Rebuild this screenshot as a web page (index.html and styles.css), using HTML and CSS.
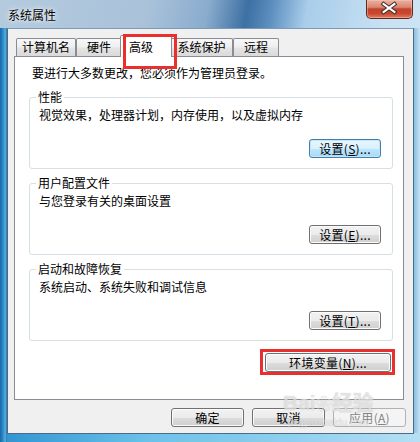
FILE: index.html
```html
<!DOCTYPE html>
<html lang="zh-CN">
<head>
<meta charset="utf-8">
<title>系统属性</title>
<link rel="stylesheet" href="styles.css">
</head>
<body>
<div class="window">
  <div class="titlebar">
    <span class="title">系统属性</span>
    <button class="close" aria-label="关闭">
      <svg width="47" height="19" viewBox="0 0 47 19">
        <path d="M18 5 L29 13 M29 5 L18 13" stroke="#3a2a2a" stroke-width="4.2" stroke-linecap="square" fill="none"/>
        <path d="M18 5 L29 13 M29 5 L18 13" stroke="#ffffff" stroke-width="2.2" stroke-linecap="square" fill="none"/>
      </svg>
    </button>
  </div>
  <div class="client">
    <div class="tabs">
      <div class="tab tab-name">计算机名</div>
      <div class="tab tab-hw">硬件</div>
      <div class="tab tab-active">高级</div>
      <div class="tab tab-prot">系统保护</div>
      <div class="tab tab-remote">远程</div>
    </div>
    <div class="panel">
      <p class="intro">要进行大多数更改，您必须作为管理员登录。</p>
      <div class="group">
        <div class="group-title">性能</div>
        <p class="group-desc">视觉效果，处理器计划，内存使用，以及虚拟内存</p>
        <button class="btn btn-focus btn-set">设置(<u>S</u>)...</button>
      </div>
      <div class="group">
        <div class="group-title">用户配置文件</div>
        <p class="group-desc">与您登录有关的桌面设置</p>
        <button class="btn btn-set">设置(<u>E</u>)...</button>
      </div>
      <div class="group">
        <div class="group-title">启动和故障恢复</div>
        <p class="group-desc">系统启动、系统失败和调试信息</p>
        <button class="btn btn-set">设置(<u>T</u>)...</button>
      </div>
      <button class="btn btn-env">环境变量(<u>N</u>)...</button>
    </div>
    <div class="actions">
      <button class="btn btn-action">确定</button>
      <button class="btn btn-action">取消</button>
      <button class="btn btn-action btn-disabled">应用(<u>A</u>)</button>
    </div>
    <div class="watermark"><span class="wm-big">Bai<span class="wm-paw">❀</span>经验</span><span class="wm-small">jingyan.baidu.com</span></div>
  </div>
</div>
</body>
</html>
```

FILE: styles.css
```css
* {
  box-sizing: border-box;
}

html, body {
  margin: 0;
  padding: 0;
  background: #ffffff;
}

body {
  width: 420px;
  height: 442px;
  overflow: hidden;
  font-family: "Noto Sans CJK SC", "Microsoft YaHei", sans-serif;
  font-size: 12px;
  color: #000;
}

.window {
  width: 420px;
  height: 442px;
  display: flex;
  flex-direction: column;
  background:
    linear-gradient(to right, #1b67a6 0%, #2d8ccd 45%, #58b0e2 75%, #2b6f9e 100%) left 28px / 7px 100% no-repeat,
    linear-gradient(to right, #2f93d2 0%, #6cc1ea 35%, #8fd0ef 70%, #b6dff3 100%) left bottom / 100% 9px no-repeat,
    linear-gradient(to right, #7fb8e0 0%, #c7e2f4 100%) right 28px / 7px 100% no-repeat,
    linear-gradient(100deg, #b4cade 0%, #a9c2da 30%, #8aaccd 42%, #3d70a3 50%, #5d90c0 55%, #a9cdea 62%, #c8e1f3 78%, #d6e8f5 100%);
}

.titlebar {
  height: 28px;
  display: flex;
  justify-content: space-between;
  align-items: flex-start;
  flex-shrink: 0;
}

.title {
  padding: 8px 0 0 8px;
  line-height: 14px;
  font-size: 12px;
  color: #000;
  text-shadow: 0 0 6px rgba(255, 255, 255, 0.9), 0 0 3px rgba(255, 255, 255, 0.9);
}

.close {
  width: 47px;
  height: 19px;
  margin: 0 7px 0 0;
  padding: 0;
  border: 1px solid #5a2b24;
  border-top: none;
  border-radius: 0 0 5px 5px;
  background: linear-gradient(#eab2a4 0%, #d98670 40%, #c4412b 50%, #c9472f 75%, #e27d60 100%);
  box-shadow: inset 0 0 0 1px rgba(255, 200, 180, 0.45);
  display: flex;
  align-items: center;
  justify-content: center;
}

.close svg {
  display: block;
  margin: -1px 0 0 -1px;
}

.client {
  position: relative;
  width: 407px;
  height: 406px;
  margin-left: 7px;
  background: #f0f0f0;
  border: 1px solid #4d6b85;
  border-top-color: #7f9ab2;
  display: flex;
  flex-direction: column;
}

.tabs {
  position: relative;
  z-index: 1;
  display: flex;
  align-items: flex-end;
  height: 22px;
  margin: 6px 0 0 8px;
}

.tab {
  height: 18px;
  margin-bottom: 1px;
  border: 1px solid #898c95;
  border-bottom: none;
  border-radius: 2px 2px 0 0;
  background: linear-gradient(#f8f8f8 0%, #efefef 45%, #e4e4e4 55%, #dadada 100%);
  line-height: 16px;
  text-align: center;
  white-space: nowrap;
}

.tab-name { width: 60px; }
.tab-hw { width: 46px; }
.tab-prot { width: 63px; }
.tab-remote { width: 46px; }

.tab-active {
  position: relative;
  width: 52px;
  height: 22px;
  margin: 0 -2px;
  background: #ffffff;
  line-height: 22px;
  text-align: left;
  padding-left: 8px;
  z-index: 2;
}

.tab-active::after {
  content: "";
  position: absolute;
  left: 2px;
  top: -2px;
  width: 48px;
  height: 29px;
  border: 3px solid #ea2f2f;
}

.panel {
  width: 390px;
  height: 344px;
  margin: -1px 0 0 6px;
  background: #ffffff;
  border: 1px solid #898c95;
  padding: 9px 10px 0 14px;
  display: flex;
  flex-direction: column;
}

.intro {
  margin: 0 0 0 3px;
  line-height: 14px;
}

.group {
  display: flex;
  flex-direction: column;
  border: 1px solid #d5dfe5;
  border-radius: 3px;
  padding: 0 11px 10px 8px;
  margin-top: 14px;
}

.intro + .group {
  margin-top: 17px;
}

.group-title {
  align-self: flex-start;
  margin: -8px 0 0 -2px;
  padding: 0 2px;
  background: #ffffff;
  line-height: 14px;
}

.group-desc {
  margin: 4px 0 0 1px;
  line-height: 14px;
}

.btn {
  height: 19px;
  padding: 0;
  border: 1px solid #707070;
  border-radius: 3px;
  background: linear-gradient(#f2f2f2 0%, #ebebeb 50%, #dddddd 51%, #cfcfcf 100%);
  box-shadow: inset 0 0 0 1px #fbfbfb;
  font-family: "Noto Sans CJK SC", "Microsoft YaHei", sans-serif;
  font-size: 12px;
  line-height: 16px;
  color: #000;
  text-align: center;
  letter-spacing: 0.3px;
}

.btn u {
  text-decoration: underline;
  text-underline-offset: 1px;
}

.btn-set {
  align-self: flex-end;
  width: 72px;
  margin-top: 17px;
}

.btn-focus {
  border-color: #3c7fb1;
  background: linear-gradient(#eaf6fd 0%, #d9f0fc 50%, #bee6fd 51%, #a7d9f5 100%);
  box-shadow: inset 0 0 0 1px #c4e5f6;
}

.btn-env {
  position: relative;
  align-self: flex-end;
  width: 126px;
  margin: 12px 2px 0 0;
}

.btn-env::after {
  content: "";
  position: absolute;
  left: -6px;
  top: -5px;
  right: -5px;
  bottom: -4px;
  border: 3px solid #ea2f2f;
  pointer-events: none;
}

.actions {
  display: flex;
  justify-content: flex-end;
  gap: 8px;
  margin: 8px 7px 0 0;
}

.btn-action {
  width: 73px;
}

.btn-disabled {
  border-color: #adb2b5;
  background: #f4f4f4;
  box-shadow: none;
  color: #838383;
}

.watermark {
  position: absolute;
  left: 275px;
  top: 362px;
  display: flex;
  flex-direction: column;
  align-items: center;
  pointer-events: none;
  color: rgba(255, 255, 255, 0.55);
  text-shadow: 0 0 1px rgba(150, 150, 150, 0.6);
}

.wm-big {
  font-family: "Liberation Sans", "Noto Sans CJK SC", sans-serif;
  font-size: 21px;
  font-weight: bold;
  line-height: 24px;
}

.wm-paw {
  font-size: 16px;
}

.wm-small {
  font-family: "Liberation Sans", sans-serif;
  font-size: 10px;
  line-height: 12px;
}
```
